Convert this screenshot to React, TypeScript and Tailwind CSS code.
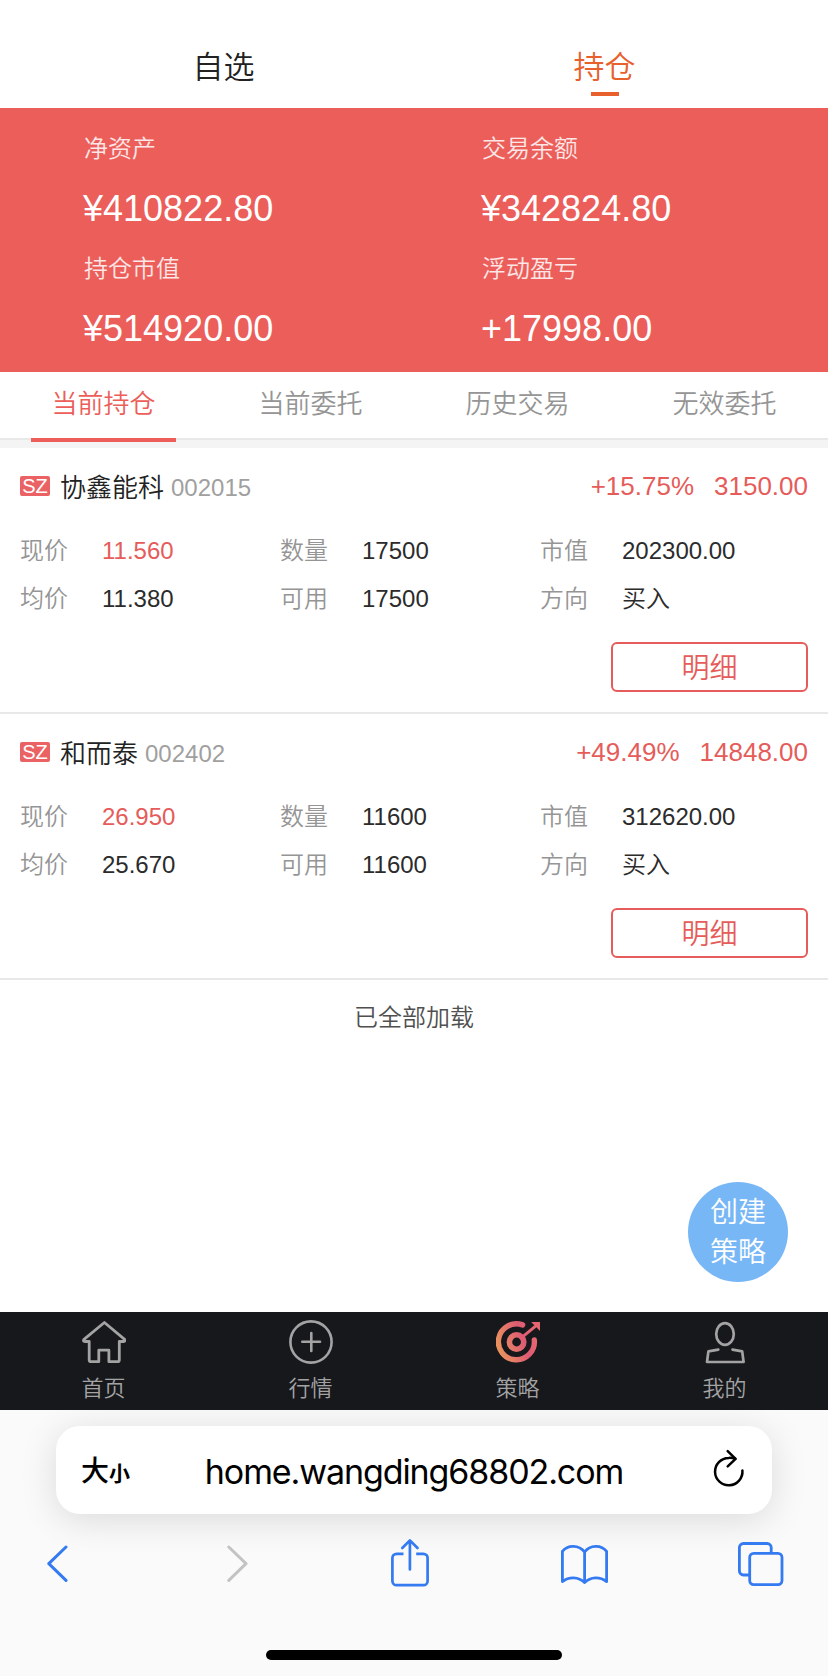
import { ReactNode, useState } from 'react'
import clsx from 'clsx'

const summary = [
    { label: '净资产', value: '¥410822.80' },
    { label: '交易余额', value: '¥342824.80' },
    { label: '持仓市值', value: '¥514920.00' },
    { label: '浮动盈亏', value: '+17998.00' },
]

const tabs = ['当前持仓', '当前委托', '历史交易', '无效委托']

type Position = {
    name: string
    code: string
    percent: string
    profit: string
    price: string
    cost: string
    amount: string
    available: string
    marketValue: string
    direction: string
}

const positions: Position[] = [
    {
        name: '协鑫能科',
        code: '002015',
        percent: '+15.75%',
        profit: '3150.00',
        price: '11.560',
        cost: '11.380',
        amount: '17500',
        available: '17500',
        marketValue: '202300.00',
        direction: '买入',
    },
    {
        name: '和而泰',
        code: '002402',
        percent: '+49.49%',
        profit: '14848.00',
        price: '26.950',
        cost: '25.670',
        amount: '11600',
        available: '11600',
        marketValue: '312620.00',
        direction: '买入',
    },
]

function HomeIcon() {
    return (
        <svg
            className="size-11"
            viewBox="0 0 44 44"
            fill="none"
            stroke="#a3a3a4"
            strokeWidth="2.8"
            strokeLinejoin="round"
        >
            <path d="M22.4 2.5 2 19.3Q.6 21.3 3 21.5H7.2V40Q7.2 41.7 9 41.7H16.8V30.2H26.9V41.7H35.6Q37.3 41.7 37.3 40V21.5H41.6Q43.8 21.3 42.6 19.3Z" />
        </svg>
    )
}

function PlusIcon() {
    return (
        <svg
            className="size-11"
            viewBox="0 0 44 44"
            fill="none"
            stroke="#a3a3a4"
            strokeWidth="2.6"
            strokeLinecap="round"
        >
            <circle cx="22" cy="22" r="20.6" />
            <path d="M13.3 21.7H31M22.3 13V31" />
        </svg>
    )
}

function TargetIcon() {
    return (
        <svg className="size-11" viewBox="0 0 44 44" fill="none">
            <defs>
                <linearGradient
                    id="target"
                    gradientUnits="userSpaceOnUse"
                    x1="4"
                    y1="30"
                    x2="38"
                    y2="18"
                >
                    <stop offset="0" stopColor="#ea905f" />
                    <stop offset="0.7" stopColor="#dd5b73" />
                    <stop offset="1" stopColor="#e56670" />
                </linearGradient>
            </defs>
            <g stroke="url(#target)" strokeLinecap="round">
                <path
                    d="M26.6 4.9A18 18 0 1 0 38.3 20"
                    strokeWidth="5.4"
                />
                <circle cx="20.6" cy="22" r="7.2" strokeWidth="5.6" />
                <path d="M28 15.6 39 6.6" strokeWidth="3" />
            </g>
            <path d="M35.2 2H44V11Z" fill="#e56670" />
        </svg>
    )
}

function UserIcon() {
    return (
        <svg
            className="size-11"
            viewBox="0 0 44 44"
            fill="none"
            stroke="#a3a3a4"
            strokeWidth="2.7"
            strokeLinejoin="round"
            strokeLinecap="round"
        >
            <ellipse cx="22" cy="14" rx="8.8" ry="10.8" />
            <path d="M15.3 29.6 5.4 31.4 4 42H40.6L39.2 31.4 29.5 29.6" />
        </svg>
    )
}

const navItems: { label: string; icon: ReactNode }[] = [
    { label: '首页', icon: <HomeIcon /> },
    { label: '行情', icon: <PlusIcon /> },
    { label: '策略', icon: <TargetIcon /> },
    { label: '我的', icon: <UserIcon /> },
]

function Field({
    label,
    value,
    red,
}: {
    label: string
    value: string
    red?: boolean
}) {
    return (
        <div className="flex h-12 items-center text-2xl leading-12">
            <span className="w-[82px] font-[350] text-[#959595]">{label}</span>
            <span
                className={clsx(
                    'font-[350]',
                    red ? 'text-[#e55c5a]' : 'text-[#2b2b2b]',
                )}
            >
                {value}
            </span>
        </div>
    )
}

function PositionCard({ item }: { item: Position }) {
    return (
        <li className="h-[266px] border-b-2 border-[#e8e8e8] px-5 pt-[14px]">
            <div className="flex h-12 items-center">
                <span className="flex h-5 w-[30px] items-center justify-center rounded-[2px] bg-[#ea6264] text-[20px] leading-5 text-white">
                    SZ
                </span>
                <span className="ml-2.5 pt-1 text-[26px] leading-12 font-[350] text-[#222]">
                    {item.name}
                </span>
                <span className="ml-[7px] pt-1 text-2xl leading-12 font-light text-[#a0a0a0]">
                    {item.code}
                </span>
                <span className="ml-auto text-[26px] leading-[46px] text-[#e55c5a]">
                    {item.percent}
                </span>
                <span className="ml-5 text-[26px] leading-[46px] text-[#e55c5a]">
                    {item.profit}
                </span>
            </div>
            <div className="mt-[17px] grid grid-cols-[260px_260px_1fr]">
                <Field label="现价" value={item.price} red />
                <Field label="数量" value={item.amount} />
                <Field label="市值" value={item.marketValue} />
                <Field label="均价" value={item.cost} />
                <Field label="可用" value={item.available} />
                <Field label="方向" value={item.direction} />
            </div>
            <button className="mt-[19px] ml-auto flex h-[50px] w-[197px] items-center justify-center rounded-[6px] border-2 border-[#e55c5a] pt-1 text-[28px] leading-[42px] font-[350] text-[#e55c5a]">
                明细
            </button>
        </li>
    )
}

function BrowserBar() {
    return (
        <footer className="h-[266px] overflow-hidden bg-[#fafafb] pt-4">
            <div className="mx-14 flex h-[88px] items-center rounded-[24px] bg-white pr-[27px] pl-[25px] text-black shadow-[0_6px_36px_rgba(0,0,0,0.13)]">
                <span className="flex w-[52px] items-baseline pt-[3px]">
                    <span className="text-[28px] font-medium">大</span>
                    <span className="text-[21px] font-bold">小</span>
                </span>
                <span className="flex-1 pt-0.5 pr-[18px] text-center font-['Inter','Noto_Sans_CJK_SC',sans-serif] text-[34px] tracking-[-1.1px]">
                    home.wangding68802.com
                </span>
                <svg
                    className="mb-1 h-10 w-8"
                    viewBox="0 0 32 40"
                    fill="none"
                    stroke="#000"
                    strokeWidth="2.5"
                    strokeLinecap="round"
                    strokeLinejoin="round"
                >
                    <path d="M29.4 22.5A13.7 13.7 0 1 1 15.7 9.9Q19 9.7 22.2 10.8" />
                    <path d="M14.7 3.2 22.6 10.8 14.7 18.4" />
                </svg>
            </div>
            <div className="mt-6 flex h-[50px] pl-[46px] text-[#347af0]">
                <svg
                    className="h-[50px] w-[22px]"
                    viewBox="0 0 22 50"
                    fill="none"
                    stroke="currentColor"
                    strokeWidth="3"
                    strokeLinecap="round"
                    strokeLinejoin="round"
                >
                    <path d="M20 9 2.8 25.7 20 42.4" />
                </svg>
                <svg
                    className="ml-[159px] h-[50px] w-[22px] text-[#c3c3c4]"
                    viewBox="0 0 22 50"
                    fill="none"
                    stroke="currentColor"
                    strokeWidth="3"
                    strokeLinecap="round"
                    strokeLinejoin="round"
                >
                    <path d="M1.8 9 19 25.7 1.8 42.4" />
                </svg>
                <svg
                    className="ml-[141px] h-[50px] w-10"
                    viewBox="0 0 40 50"
                    fill="none"
                    stroke="currentColor"
                    strokeWidth="2.7"
                    strokeLinejoin="round"
                >
                    <path d="M13.5 15.8H6.6a4.2 4.2 0 0 0-4.2 4.2V43a4.2 4.2 0 0 0 4.2 4.2H33.4a4.2 4.2 0 0 0 4.2-4.2V20a4.2 4.2 0 0 0-4.2-4.2H26.2" />
                    <path
                        d="M19.9 3V31.4M12.3 10 19.9 2.4 27.5 10"
                        strokeLinecap="round"
                    />
                </svg>
                <svg
                    className="ml-[130px] h-[50px] w-[50px]"
                    viewBox="0 0 50 50"
                    fill="none"
                    stroke="currentColor"
                    strokeWidth="2.8"
                    strokeLinejoin="round"
                >
                    <path d="M24.6 14C19 6.5 7.5 6.5 2.4 13.4V43.6C9 38.4 18.5 38.4 24.6 44.6C30.7 38.4 40 38.4 46.6 43.6V13.4C41.5 6.5 30 6.5 24.6 14V44" />
                </svg>
                <svg
                    className="ml-[127px] h-[50px] w-12"
                    viewBox="0 0 48 50"
                    fill="none"
                    stroke="currentColor"
                    strokeWidth="2.8"
                >
                    <rect x="12.7" y="15.4" width="32.3" height="31.2" rx="4" />
                    <path d="M12.7 37H6.4a4 4 0 0 1-4-4V9.5a4 4 0 0 1 4-4H30.2a4 4 0 0 1 4 4V15.4" />
                </svg>
            </div>
            <div className="mx-auto mt-[62px] h-2.5 w-[296px] rounded-full bg-black" />
        </footer>
    )
}

export default function App() {
    const [active, setActive] = useState(tabs[0])

    return (
        <div className="relative flex h-[1676px] w-[828px] flex-col overflow-hidden bg-white font-['Liberation_Sans','Noto_Sans_CJK_SC',sans-serif]">
            <header className="flex h-[108px] px-[33px] pt-11 text-[31px] leading-12 font-[350]">
                <div className="flex-1 text-center text-[#222]">自选</div>
                <div className="flex flex-1 flex-col items-center text-[#e8602c]">
                    持仓
                    <span className="h-1 w-7 bg-[#e8602c]" />
                </div>
            </header>

            <section className="grid h-[264px] grid-cols-[398px_1fr] content-start bg-[#eb5e5a] pt-[11px] pl-[83px] text-white">
                {summary.map((item) => (
                    <div key={item.label} className="h-[120px]">
                        <div className="pl-px text-2xl leading-[60px] font-[350] text-white/85">
                            {item.label}
                        </div>
                        <div className="text-[36px] leading-[60px]">
                            {item.value}
                        </div>
                    </div>
                ))}
            </section>

            <nav className="flex h-[76px] border-b-8 border-[#f4f4f4]">
                {tabs.map((tab) => (
                    <button
                        key={tab}
                        onClick={() => setActive(tab)}
                        className={clsx(
                            'relative h-[68px] flex-1 border-b-2 border-[#e8e8e8] pb-0.5 text-[26px] font-[350]',
                            tab === active
                                ? 'text-[#eb5e5a]'
                                : 'text-[#959595]',
                        )}
                    >
                        {tab}
                        {tab === active && (
                            <span className="absolute -bottom-1 left-[31px] h-1 w-[145px] bg-[#eb5e5a]" />
                        )}
                    </button>
                ))}
            </nav>

            <ul>
                {positions.map((item) => (
                    <PositionCard key={item.code} item={item} />
                ))}
            </ul>
            <p className="flex-1 pt-[18px] text-center text-2xl leading-10 font-[350] text-[#505050]">
                已全部加载
            </p>

            <button className="absolute top-[1182px] left-[688px] size-[100px] rounded-full bg-[#78b7f6] pt-0.5 text-[28px] leading-10 font-[350] text-white">
                创建
                <br />
                策略
            </button>

            <nav className="flex h-[98px] bg-[#17181c]">
                {navItems.map((item) => (
                    <div
                        key={item.label}
                        className="flex flex-1 flex-col items-center pt-2 text-[22px] leading-8 font-[350] text-[#a3a3a4]"
                    >
                        {item.icon}
                        <span className="mt-[9px]">{item.label}</span>
                    </div>
                ))}
            </nav>

            <BrowserBar />
        </div>
    )
}
